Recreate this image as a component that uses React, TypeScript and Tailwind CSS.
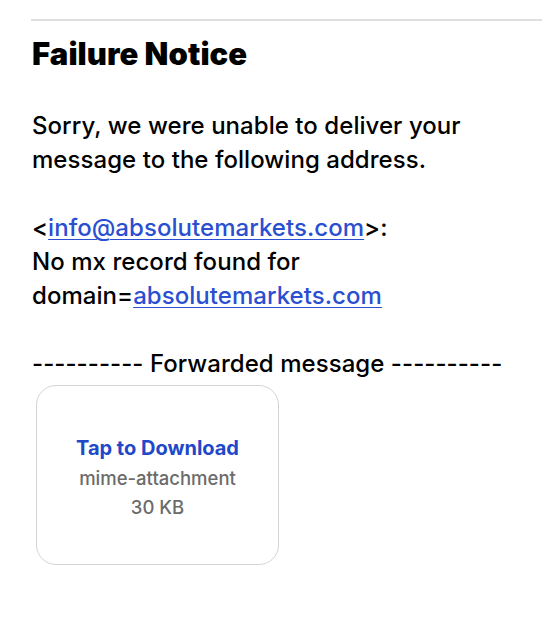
export default function App() {
  return (
    <div className="w-[542px] h-[640px] bg-white overflow-hidden" style={{ fontFamily: 'Inter, "Noto Sans", sans-serif' }}>
      <div className="pt-[19px] pl-[31px]">
        <div className="h-[2px] bg-[#e0e0e0]" />
      </div>
      <div className="pl-[32px] pr-2 text-black">
        <h1 className="mt-[13px] h-[40px] leading-[40px] text-[31px] font-black tracking-[0.05px]">Failure Notice</h1>
        <div className="mt-[35px] text-[24px] leading-[34px] tracking-[0.05px] font-[450] whitespace-nowrap">
          <p>Sorry, we were unable to deliver your</p>
          <p>message to the following address.</p>
          <p className="mt-[34px]">
            &lt;<a className="text-[#2a4fd1] underline underline-offset-[3px] decoration-1">info@absolutemarkets.com</a>&gt;:
          </p>
          <p>No mx record found for</p>
          <p>
            domain=<a className="text-[#2a4fd1] underline underline-offset-[3px] decoration-1">absolutemarkets.com</a>
          </p>
          <p className="mt-[34px]">---------- Forwarded message ----------</p>
        </div>
        <div className="mt-[4px] ml-[4px] w-[243px] h-[180px] rounded-[20px] border border-[#d4d4d4] flex flex-col items-center justify-center pt-[4px]">
          <div className="text-[20px] leading-[30px] font-bold text-[#2148c8]">Tap to Download</div>
          <div className="text-[18.5px] leading-[30px] text-[#6b6b6b] font-medium">mime-attachment</div>
          <div className="text-[18.5px] leading-[28px] text-[#6b6b6b] font-medium">30 KB</div>
        </div>
      </div>
    </div>
  );
}
